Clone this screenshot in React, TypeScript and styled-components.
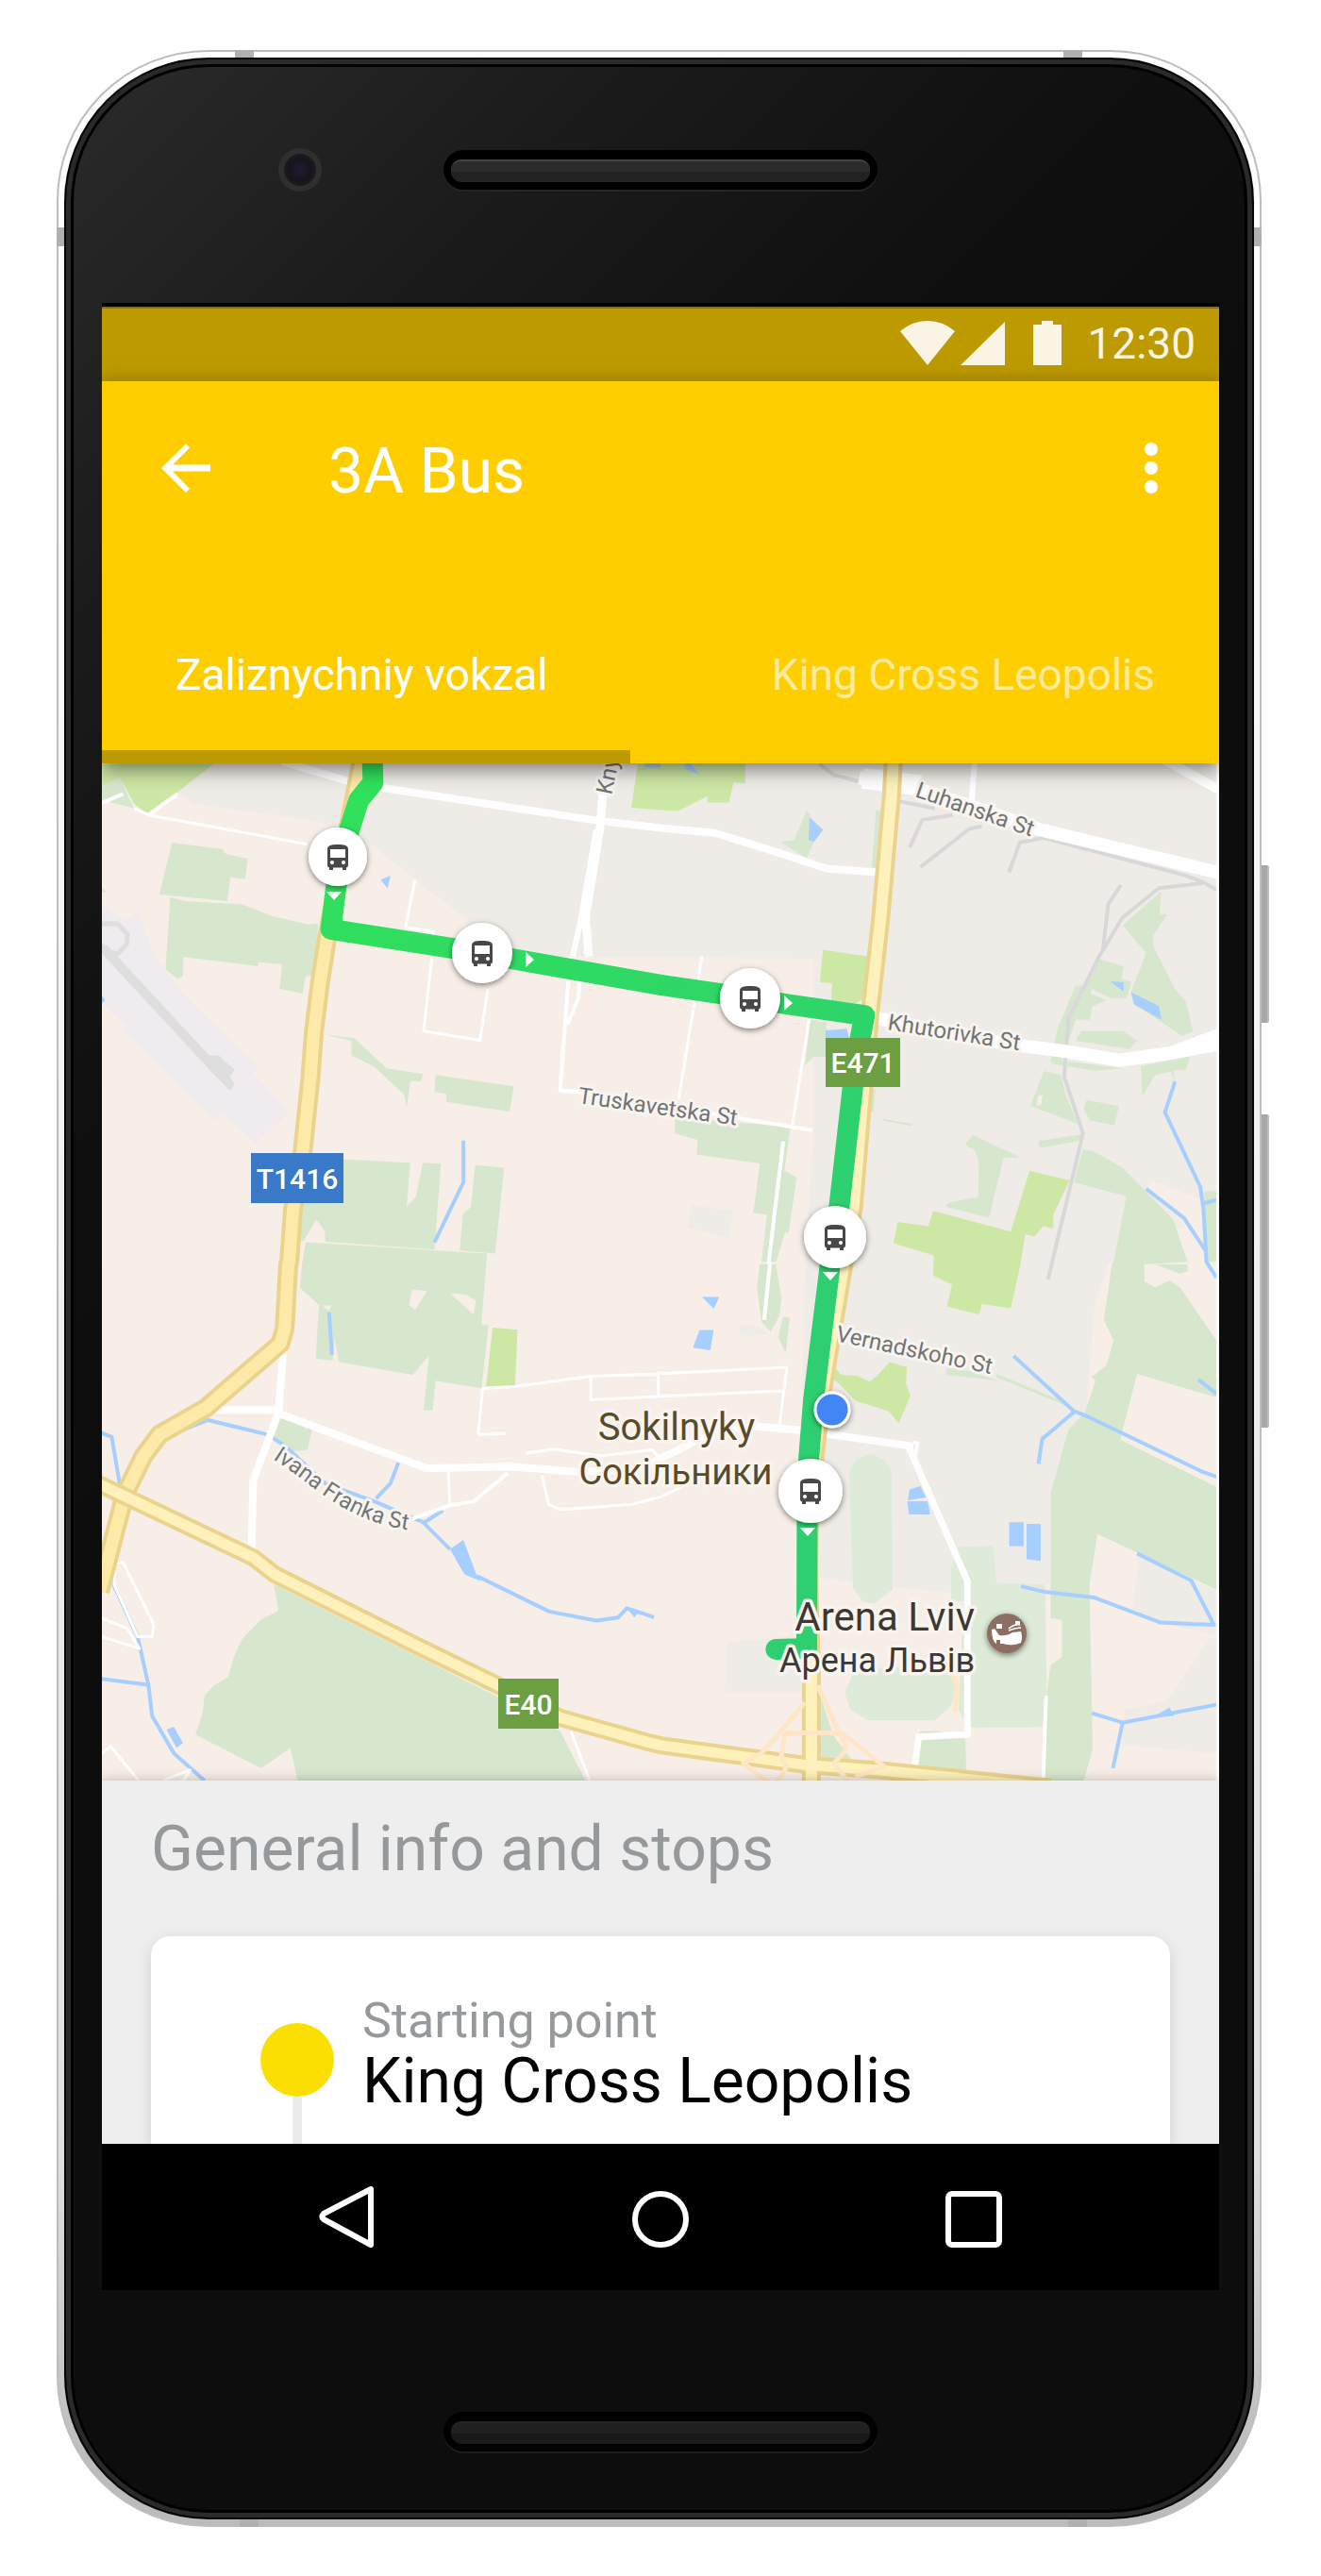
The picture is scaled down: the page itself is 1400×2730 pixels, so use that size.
import React, { useState } from "react";
import styled, { createGlobalStyle } from "styled-components";

const GlobalStyle = createGlobalStyle`
  * { box-sizing: border-box; }
  body {
    margin: 0;
    background: #ffffff;
    font-family: Roboto, "Noto Sans", "Liberation Sans", sans-serif;
  }
`;

/* ---------- Handset ---------- */

const Page = styled.main`
  padding: 53px 63px 52px 60px;
`;

const Frame = styled.div`
  position: relative;
  padding: 6px;
  border: 2px solid #bdbdbd;
  border-radius: 160px;
  background: linear-gradient(180deg, #ffffff 0%, #f4f4f4 40%, #e2e0de 85%, #bbbbbb 98%);
`;

const Body = styled.div`
  padding: 0 35px 0 38px;
  border: 2px solid #050505;
  border-radius: 153px;
  box-shadow: inset 0 0 0 5px #2a2a2a, inset 0 0 0 8px #000000;
  background: linear-gradient(135deg, #2b2b2b 0, #1b1b1b 420px, #101010 800px, #0d0d0d 1100px);
`;

const Antenna = styled.span<{ $edge: "top" | "bottom" | "left" | "right"; $at: string }>`
  position: absolute;
  background: #b0b0b0;
  ${({ $edge }) => $edge}: -2px;
  ${({ $edge, $at }) =>
    $edge === "top" || $edge === "bottom"
      ? `left: ${$at}; width: 20px; height: 8px;`
      : `top: ${$at}; width: 8px; height: 20px;`}
`;

const SideKey = styled.span<{ $top: number; $length: number }>`
  position: absolute;
  right: -10px;
  top: ${({ $top }) => $top}px;
  width: 8px;
  height: ${({ $length }) => $length}px;
  border-right: 2px solid #bdbdbd;
  border-radius: 0 2px 2px 0;
  background: #a8a8a8;
`;

const TopBezel = styled.div`
  display: grid;
  grid-template-columns: 1fr 460px 1fr;
  align-items: center;
  height: 258px;
  padding-bottom: 24px;
`;

const BottomBezel = styled.div`
  display: flex;
  align-items: center;
  justify-content: center;
  height: 241px;
  padding-top: 59px;
`;

const Camera = styled.span`
  justify-self: end;
  width: 46px;
  height: 46px;
  margin-right: 129px;
  border: 6px solid #2f2f2f;
  border-radius: 50%;
  background: radial-gradient(circle, #221a38 0, #17141c 50%, #1f1c24 80%, #141217 100%);
`;

const Speaker = styled.span<{ $dim?: boolean }>`
  width: 460px;
  height: 42px;
  padding: 10px 8px;
  border-radius: 21px;
  background: #000000;
  box-shadow: 0 2px 0 ${({ $dim }) => ($dim ? "#1c1c1c" : "#242424")};

  &::before {
    content: "";
    display: block;
    height: 22px;
    border-top: 2px solid ${({ $dim }) => ($dim ? "#262626" : "#444444")};
    border-radius: 11px;
    background: ${({ $dim }) =>
      $dim
        ? "linear-gradient(180deg, #202020 50%, #191919 50%)"
        : "linear-gradient(180deg, #2b2b2b 50%, #222222 50%)"};
  }
`;

const Screen = styled.div`
  overflow: hidden;
  border-top: 4px solid #000000;
  background: #000000;
`;

/* ---------- App bar ---------- */

const StatusBar = styled.div`
  display: flex;
  align-items: center;
  justify-content: flex-end;
  height: 79px;
  padding: 0 25px 4px 0;
  border-top: 2px solid #8a7000;
  background: #bc9a00;
  color: #f9f4e4;
  font-size: 46px;
  line-height: 56px;
`;

const StatusIcons = styled.svg`
  width: 176px;
  height: 48px;
  margin-right: 22px;
  fill: currentColor;
`;

const Header = styled.header`
  position: relative;
  z-index: 1;
  background: #ffce00;
  color: #ffffff;
  box-shadow: 0 6px 20px rgba(0, 0, 0, 0.5);
`;

const Toolbar = styled.div`
  display: flex;
  align-items: center;
  height: 192px;
  padding: 0 48px 0 64px;
`;

const IconButton = styled.button`
  display: block;
  width: 48px;
  height: 72px;
  padding: 0 0 8px;
  border: 0;
  background: transparent;
  color: inherit;
  cursor: pointer;

  svg {
    display: block;
    width: 100%;
    height: 100%;
    overflow: visible;
    fill: currentColor;
  }
`;

const Title = styled.h1`
  flex: 1;
  margin: 0;
  padding-left: 128px;
  font-size: 66px;
  font-weight: 400;
  line-height: 80px;
`;

const Tabs = styled.div`
  display: flex;
`;

const Tab = styled.button<{ $active: boolean; $end?: boolean }>`
  flex: ${({ $end }) => ($end ? "1" : "0 0 47.3%")};
  padding: 91px 68px 52px 78px;
  border: 0;
  border-bottom: 14px solid ${({ $active }) => ($active ? "#bc9a00" : "transparent")};
  background: transparent;
  color: ${({ $active }) => ($active ? "#ffffff" : "#ffeb9c")};
  font-family: inherit;
  font-size: 46px;
  line-height: 56px;
  text-align: ${({ $end }) => ($end ? "right" : "left")};
  white-space: nowrap;
  cursor: pointer;
`;

/* ---------- Route details ---------- */

const Details = styled.section`
  position: relative;
  padding: 33px 52px 0;
  background: #eeeeee;
  box-shadow: 0 0 12px rgba(0, 0, 0, 0.25);
  overflow: clip;
  overflow-clip-margin: 12px;
`;

const SectionTitle = styled.h2`
  margin: 0 0 52px;
  color: #96999b;
  font-size: 66px;
  font-weight: 400;
  line-height: 80px;
`;

const Card = styled.div`
  display: flex;
  gap: 30px;
  padding: 0 116px;
  border-radius: 20px 20px 0 0;
  background: #ffffff;
  box-shadow: 0 4px 16px rgba(0, 0, 0, 0.12);
`;

const StopTrack = styled.div`
  display: flex;
  flex-direction: column;
  align-items: center;
  padding-top: 92px;

  &::before {
    content: "";
    width: 78px;
    height: 78px;
    border-radius: 50%;
    background: #fbdf00;
  }

  &::after {
    content: "";
    flex: 1;
    width: 10px;
    background: #ececec;
  }
`;

const StopText = styled.div`
  padding: 62px 0 30px;
`;

const StopKind = styled.p`
  margin: 0;
  color: #96999b;
  font-size: 52px;
  line-height: 56px;
`;

const StopName = styled.p`
  margin: 0;
  color: #000000;
  font-size: 66px;
  line-height: 72px;
`;

const NavBar = styled.nav`
  position: relative;
  display: grid;
  grid-template-columns: repeat(3, 28%);
  justify-content: center;
  justify-items: center;
  align-items: center;
  height: 155px;
  background: #000000;
  color: #ffffff;
`;

const NavButton = styled.button`
  padding: 0;
  border: 0;
  background: transparent;
  color: inherit;
  cursor: pointer;

  svg {
    display: block;
    width: 64px;
    height: 68px;
    fill: none;
    stroke: currentColor;
    stroke-width: 6;
    stroke-linejoin: round;
  }
`;

/* ---------- Map ---------- */

const MapSvg = styled.svg`
  display: block;
  width: 100%;
  height: auto;
  background: #f7eee7;

  polyline, .line { fill: none; stroke-linejoin: round; }
  text { font-family: Roboto, "Noto Sans", sans-serif; }
`;

const StreetName = styled.text`
  fill: #737373;
  font-size: 24px;
  paint-order: stroke;
  stroke: #f8f5f1;
  stroke-width: 6px;
  stroke-linejoin: round;
`;

const PlaceName = styled.text<{ $size: number; $tone: string }>`
  fill: ${({ $tone }) => $tone};
  font-size: ${({ $size }) => $size}px;
  paint-order: stroke;
  stroke: #f9f4ee;
  stroke-width: 7px;
  stroke-linejoin: round;
`;

const ShieldText = styled.text`
  fill: #ffffff;
  font-size: 30px;
  font-weight: 500;
  text-anchor: middle;
`;

/* The map is split in four tiles; each tile has its own 1568-unit grid. */
const tile = (ox: number, oy: number, sy: number) => (points: string) =>
  points
    .trim()
    .split(/\s+/)
    .map((pair) => {
      const [x, y] = pair.split(",").map(Number);
      return `${Math.round((ox + (x * 600) / 1568) * 10) / 10},${Math.round((oy + (y * sy) / 1568) * 10) / 10}`;
    })
    .join(" ") + " ";

const nw = tile(100, 800, 540);
const ne = tile(700, 800, 540);
const sw = tile(100, 1340, 560);
const se = tile(700, 1340, 560);

type Line = [number, string];

const urban = [
  nw("330,28 230,110 270,150 620,205 770,280 1030,505 1050,620") +
    ne("0,622 425,628 425,1150") +
    se("400,0 390,550 437,760 440,930 640,958 820,975 1080,950 1080,680 1180,440 1200,140 1240,0") +
    ne("1545,1400 1545,20"),
  ne("85,1385 202,1403 190,1487 75,1457"),
  se("185,1120 390,1100 390,1270 178,1268"),
  se("1325,870 1470,938 1540,965 1540,1100 1385,1063 1308,1025"),
  se("1520,1112 1540,1105 1540,1452 1278,1425 1285,1320 1400,1298"),
  se("220,178 270,185 300,205 260,212 218,210"),
];

const airport = nw(
  "22,465 88,510 118,480 170,625 250,740 455,960 440,980 538,1100 447,1197 355,1103 335,1125 78,843 90,835 22,765"
);

const woods = [
  nw("215,270 357,290 360,303 425,320 418,382 377,377 368,450 180,430"),
  nw("210,438 250,450 410,460 490,495 590,522 620,518 610,680 585,680 577,735 513,720 520,645 455,638 453,650 247,622 245,680 230,690 197,660"),
  nw("635,860 720,872 810,965 910,982 905,1005 875,1003 865,1085 858,1045 775,960 712,925 712,880"),
  nw("945,985 1162,1020 1150,1098 975,1068 975,1042 942,1038"),
  nw("690,1245 875,1255 865,1390 890,1360 910,1255 960,1258 942,1522 640,1498 638,1465 615,1430 580,1495 565,1495 580,1380 690,1380"),
  nw("1055,1262 1135,1270 1110,1535 1012,1525 1020,1415 1043,1390"),
  nw("585,1500 1088,1535") +
    sw("1085,0 1072,177 1092,180 1072,368 945,345 937,433 912,433 927,270 882,328 677,290 665,220 660,285 613,280 622,120 570,70 575,0"),
  nw("22,95 70,70 110,165 22,140"),
  nw("22,408 35,425 22,421"),
  ne("405,170 415,185 410,200 412,262 425,268 405,318 330,268 370,262"),
  ne("597,170 610,172 600,350 585,345"),
  ne("415,815 460,825 457,930 425,928 400,955"),
  ne("1387,420 1382,490 1405,490 1365,555 1365,590 1425,720 1455,760 1475,850 1445,865 1310,765 1303,730 1345,610 1280,525"),
  ne("1215,628 1282,650 1277,690 1305,700 1290,750 1250,750 1195,720 1190,735 1235,755 1195,775 1190,815 1150,815 1110,945 1080,945 1100,840 1150,710 1175,710"),
  ne("1165,850 1280,850 1320,880 1300,905 1150,880"),
  ne("1080,935 1180,950 1280,965 1200,972 1085,950"),
  ne("1330,958 1467,928 1455,970 1420,970 1425,1005 1413,975 1370,985 1335,1050"),
  ne("1062,973 1110,985 1120,1040 1155,1135 1025,1080"),
  ne("1180,1063 1270,1080 1257,1140 1190,1125 1172,1090"),
  ne("1047,1188 1165,1168 1165,1187 1050,1210"),
  ne("1505,1345 1545,1340 1545,1560 1515,1560"),
  ne("40,1115 360,1145 343,1280 377,1300 355,1470 345,1470 320,1560 280,1560 295,1415 257,1410 275,1257 100,1230 103,1185 40,1165"),
  ne("865,1170 997,1238 950,1240 910,1425 790,1390 800,1378 880,1360 882,1250 870,1215 843,1200"),
  ne("570,1010 595,1030 590,1100 560,1090"),
  ne("557,1160 570,1200 560,1330 525,1400"),
  ne("615,1120 698,1135 695,1142 615,1125"),
  ne("1170,1213 1200,1220 1280,1270 1420,1430 1460,1560") +
    se("1340,0 1340,50 1370,68 1410,48 1440,70 1540,225 1540,395 1320,325 1273,520 1540,660 1540,965 1210,800 1188,950 1197,1440 1172,1532 1060,1532 1070,1280 1080,1190 1112,1165 1112,1055 1080,1050 1080,680 1130,490 1175,440 1205,345 1193,335 1235,300 1255,225 1228,165 1250,0") +
    ne("1255,1560 1290,1358 1145,1315"),
  se("1370,0 1460,0 1460,20 1440,28"),
  se("275,0 320,0 335,100 330,150 305,200 280,170 267,70"),
  se("340,155 358,158 347,262 325,215"),
  se("500,0 518,0 512,60 498,62"),
  se("793,305 860,318 935,345 790,328"),
  se("930,325 1125,410 1120,418 930,335"),
  se("445,1290 480,1400 515,1450 540,1480 440,1470"),
  se("720,1385 770,1385 845,1408 847,1532 700,1500"),
  sw("497,950 720,1070 1130,1290 1290,1385 1360,1532 563,1532 543,1435 462,1495 280,1395 300,1330 305,1280 330,1250 370,1225 388,1160 410,1110 460,1055 510,1028"),
  sw("515,455 603,490 590,550 545,555 495,510"),
];

const stadium = [
  se("585,562 620,580 640,610 643,965 590,1008 560,1000 533,960 522,610 545,575"),
  se("540,1200 800,1190 820,1250 805,1310 760,1352 575,1352 525,1320 510,1270"),
  se("825,838 922,836 930,945 1065,950 1070,1280 1065,1373 855,1375 825,1320 840,1000 805,1000 805,900"),
];

const parks = [
  nw("22,28 330,28 150,185 110,150 70,70 22,95"),
  nw("1505,28 1570,28 1570,170 1487,163"),
  ne("0,28 235,28 235,88 202,85 190,147 130,147 130,128 50,172 0,170"),
  ne("450,600 572,620 562,750 540,765 473,755 475,703 442,700"),
  ne("1022,1280 1133,1310 1088,1415 1088,1458 1060,1450 1035,1482 1010,1475 998,1560") +
    se("997,0 970,130 890,118 883,148 793,125 808,60 755,33") +
    ne("757,1540 645,1503 657,1437 742,1450 755,1403 970,1467"),
  se("470,330 487,310 500,328 545,330 580,348 600,330 635,290 682,305 680,355 692,390 660,472 632,435 540,405 500,360"),
  sw("1103,188 1172,194 1165,362 1085,362"),
];

const clearings = [
  sw("880,75 922,78 888,135 872,120"),
  sw("985,85 1030,90 1057,108 1050,148"),
  sw("632,122 655,122 650,140"),
  ne("1360,1310 1500,1370 1512,1530 1430,1420 1345,1340"),
  ne("1045,1050 1058,1045 1055,1075 1042,1080"),
];

const ponds = [
  nw("793,385 820,372 812,410"),
  nw("1525,28 1568,28 1568,40 1525,40"),
  nw("20,740 30,755 20,765"),
  ne("65,28 85,28 108,60 70,45"),
  ne("412,192 450,230 425,268 410,262"),
  ne("457,848 515,843 523,871 457,871"),
  ne("1245,697 1283,700 1283,728"),
  ne("1303,730 1380,772 1388,815 1312,768"),
  se("115,97 163,97 147,132"),
  se("108,195 147,195 138,255 90,247"),
  se("690,668 720,658 735,692 685,700"),
  se("683,703 740,703 747,742 688,742"),
  se("966,765 1006,765 1006,836 966,836"),
  se("1014,770 1053,770 1053,880 1014,875"),
  se("1360,1345 1410,1315 1422,1340"),
  sw("985,845 1022,818 1058,920 1070,940 1025,920"),
  sw("200,1380 220,1372 245,1420 228,1435"),
  sw("1475,1020 1510,1030 1495,1047"),
];

const streams = [
  nw("1022,1187 1022,1315 942,1500"),
  ne("1425,1005 1397,1100 1495,1330 1504,1400 1512,1560") + se("1540,40"),
  ne("1345,1335 1450,1425 1512,1530"),
  ne("1505,1380 1545,1368"),
  se("1490,342 1545,388"),
  se("978,272 1145,435 1180,450 1500,615 1545,632"),
  se("1145,438 1057,518 1047,592"),
  se("1320,858 1470,938 1533,1070 1385,1063 1200,988 1065,972 998,955"),
  se("1195,1332 1280,1360 1545,1305"),
  se("1280,1360 1253,1495"),
  sw("20,500 48,512 70,650"),
  sw("200,510 315,462 480,505 530,540 640,650 780,705 910,765 985,845"),
  sw("780,695 820,650 842,588"),
  sw("915,765 965,730"),
  sw("1060,925 1260,1030 1390,1057 1450,1048 1475,1020 1550,1047"),
  sw("38,870 60,880 40,920 120,1105 150,1250 160,1340 220,1450 305,1532"),
  sw("20,1230 148,1247"),
  sw("650,142 658,268"),
];

const tracks = [
  ne("440,28 480,62 550,82"),
  ne("650,140 760,165"),
  ne("690,285 725,200 810,185"),
  ne("720,345 855,228 890,220"),
  ne("965,362 995,270 1060,255 1450,370 1500,390 1545,418"),
  ne("1500,395 1380,410 1280,500 1215,620 1130,810 1118,990 1170,1165 1085,1560") + se("1073,45"),
  ne("1275,400 1240,460 1225,600"),
];

const streets: Line[] = [
  [8, nw("520,20 730,90 1380,200 1568,225") + ne("150,240 310,295 460,350 610,362")],
  [3, nw("110,165 150,185 590,275")],
  [4, nw("150,185 230,120")],
  [4, nw("20,148 80,120")],
  [9, nw("1410,100 1400,230 1360,500 1370,620")],
  [6, nw("1390,230 1345,520 1325,620")],
  [4, nw("1318,620 1290,1033 1340,1037") + ne("215,1118 420,1155")],
  [4, nw("1345,680 1340,750 1310,830")],
  [3, nw("888,385 862,530 940,545 935,620 912,850 1068,878 1090,720")],
  [3, ne("115,620 50,1060")],
  [3, ne("412,810 365,1140")],
  [14, ne("550,70 700,100 1050,230 1545,362")],
  [22, ne("560,72 720,95")],
  [6, ne("870,20 862,140")],
  [10, ne("1395,15 1560,115")],
  [14, ne("560,800 800,860 1000,895 1120,912 1270,940 1400,920 1545,890")],
  [12, ne("1400,920 1545,860")],
  [4, ne("340,1190 315,1420 300,1560") + se("303,0 287,165")],
  [8, sw("525,235 510,440 440,640 435,860")],
  [8, sw("320,432 510,432")],
  [8, sw("505,440 920,605 1150,600 1330,615 1500,610") + se("60,545 150,490 260,480 390,492 700,540")],
  [7, se("685,535 850,940 850,1395 715,1402 703,1500")],
  [4, se("700,530 712,530 705,570")],
  [3, sw("1063,505 1075,368 1170,362 1375,332 1560,325") + se("350,305 330,475")],
  [3, sw("1063,505 1140,503")],
  [3, sw("1375,335 1375,402 1560,392") + se("340,375")],
  [3, sw("1562,325 1562,392")],
  [3, sw("980,610 985,715")],
  [4, sw("880,755 985,715 1050,703 1145,620")],
  [3, sw("1240,625 1258,712 1290,728 1490,712") + se("0,690 60,660")],
  [3, sw("1195,560 1275,548 1400,568 1545,550 1568,580")],
  [3, sw("55,885 80,885 165,1070 160,1105 120,1105 55,950 55,885")],
  [3, sw("20,1050 90,1080 125,1140 20,1105")],
  [3, sw("20,1450 45,1430 125,1535")],
  [3, sw("190,1532 265,1500 245,1535")],
  [3, sw("1320,1385 1372,1532")],
  [4, se("1068,1280 1065,1370 1060,1532")],
];

const ramps = [
  se("400,1300 330,1390 280,1450 230,1480 300,1540"),
  se("345,1390 335,1460 350,1490 320,1540"),
  se("345,1390 500,1390 515,1440 480,1480 520,1535"),
  se("435,1250 490,1380 620,1490 540,1520"),
  se("800,1200 822,1250 815,1330"),
];

const roadT = nw("740,20 690,300 645,560 625,700 608,850 598,1000 577,1220 550,1400 540,1560") +
  sw("537,0 527,190 515,235 310,425 180,505 135,570 85,680 15,970");
const roadE40 = sw("0,645 440,870 500,920 900,1135 1130,1255 1290,1345 1540,1420") + se("0,1427 400,1485 600,1500 1080,1552");
const roadE471 = ne("645,15 640,120 610,500 580,800 535,1390") + se("445,400 415,700 410,900 418,1210 418,1560");

const route = nw("770,10 772,85 732,140 708,225 670,400 655,537 990,595 1160,628") +
  ne("0,708 165,735 355,768 565,802 540,950 495,1390") +
  se("470,0 424,400 411,570 406,760 405,1140 320,1142");

const stops = [
  { x: 358, y: 908, r: 31 },
  { x: 511, y: 1010, r: 32 },
  { x: 795, y: 1058, r: 32 },
  { x: 885, y: 1311, r: 33 },
  { x: 859, y: 1580, r: 34 },
];

const arrows = [
  { x: 354, y: 949, turn: 0 },
  { x: 561, y: 1017, turn: -90 },
  { x: 835, y: 1063, turn: -90 },
  { x: 880, y: 1352, turn: 0 },
  { x: 856, y: 1623, turn: 0 },
];

const Areas = ({ shapes, fill }: { shapes: string[]; fill: string }) => (
  <g fill={fill}>
    {shapes.map((points, i) => (
      <polygon key={i} points={points} />
    ))}
  </g>
);

const Lines = ({ lines, stroke, width }: { lines: string[]; stroke: string; width: number }) => (
  <g stroke={stroke} strokeWidth={width}>
    {lines.map((points, i) => (
      <polyline key={i} points={points} />
    ))}
  </g>
);

const Road = ({ points, width, fill }: { points: string; width: number; fill: string }) => (
  <>
    <polyline points={points} stroke="#ead38c" strokeWidth={width} />
    <polyline points={points} stroke={fill} strokeWidth={width - 8} />
  </>
);

const Stop = ({ x, y, r }: { x: number; y: number; r: number }) => (
  <g transform={`translate(${x} ${y})`}>
    <circle r={r} fill="#ffffff" filter="url(#lift)" />
    <path
      fill="#484848"
      fillRule="evenodd"
      d="M-11,-8 C-11,-12 -7,-13 0,-13 C7,-13 11,-12 11,-8 V9 Q11,11 9,11.500 V14 H5 V11.500 H-5 V14 H-9 V11.500 Q-11,11 -11,9 Z M-8,-8 V1 H8 V-8 Z M-6,4 A2,2 0 1 0 -6,8.200 A2,2 0 1 0 -6,4 Z M6,4 A2,2 0 1 0 6,8.200 A2,2 0 1 0 6,4 Z"
    />
  </g>
);

const Shield = ({ x, y, w, h, fill, label }: { x: number; y: number; w: number; h: number; fill: string; label: string }) => (
  <g>
    <rect x={x} y={y} width={w} height={h} fill={fill} />
    <ShieldText x={x + w / 2} y={y + h / 2 + 11}>
      {label}
    </ShieldText>
  </g>
);

const RouteMap = () => (
  <MapSvg viewBox="108 809 1184 1078" role="img" aria-label="Route map">
    <defs>
      <linearGradient id="routeTone" gradientUnits="userSpaceOnUse" x1="358" y1="820" x2="700" y2="1420">
        <stop offset="0" stopColor="#30e25a" />
        <stop offset="1" stopColor="#2dcf70" />
      </linearGradient>
      <filter id="lift" x="-40%" y="-40%" width="180%" height="180%">
        <feDropShadow dx="0" dy="2" stdDeviation="3" floodColor="#000000" floodOpacity="0.5" />
      </filter>
      <path id="franka" d="M289,1546 C320,1566 338,1584 368,1600 S420,1620 452,1624" />
    </defs>

    <Areas shapes={urban} fill="#efece7" />
    <Areas shapes={[airport]} fill="#efebee" />
    <g stroke="#dedede" className="line">
      <polyline points={nw("15,520 65,520 92,552 90,582 65,612 35,605 15,580")} strokeWidth="5" />
      <polyline points={nw("25,595 350,985")} strokeWidth="10" />
    </g>
    <Areas shapes={[nw("315,925 345,925 388,970 375,990 388,1015 375,1033 320,970")]} fill="#dedede" />
    <Areas shapes={woods} fill="#d7e7ce" />
    <Areas shapes={stadium} fill="#deebd8" />
    <Areas shapes={parks} fill="#cde7a4" />
    <Areas shapes={clearings} fill="#f7eee7" />
    <Lines lines={streams} stroke="#a6ceff" width={4} />
    <Areas shapes={ponds} fill="#a6ceff" />
    <Lines lines={tracks} stroke="#d8d8d8" width={4} />
    <g stroke="#ffffff">
      {streets.map(([width, points], i) => (
        <polyline key={i} points={points} strokeWidth={width} />
      ))}
    </g>
    <Road points={roadT} width={21} fill="#feeaa8" />
    <Road points={roadE471} width={20} fill="#fff1bb" />
    <Road points={roadE40} width={19} fill="#fff1bb" />
    <polyline points={se("418,1420 418,1540")} stroke="#fff1bb" strokeWidth="12" />
    <Lines lines={ramps} stroke="#fee6c6" width={5} />
    <rect x="1289" y="809" width="3" height="1078" fill="#ffffff" />

    <polyline points={route} stroke="url(#routeTone)" strokeWidth="22" strokeLinecap="round" />
    {arrows.map(({ x, y, turn }) => (
      <path key={`${x}-${y}`} d="M-8,-4 H8 L0,5 Z" fill="#ffffff" transform={`translate(${x} ${y}) rotate(${turn})`} />
    ))}
    {stops.map((stop) => (
      <Stop key={`${stop.x}-${stop.y}`} {...stop} />
    ))}
    <circle cx="882" cy="1494" r="18" fill="#4285f4" stroke="#ffffff" strokeWidth="3" filter="url(#lift)" />

    <StreetName transform="translate(648 843) rotate(-78)">Kny</StreetName>
    <StreetName transform="translate(969 844) rotate(19)">Luhanska St</StreetName>
    <StreetName transform="translate(940 1091) rotate(9)">Khutorivka St</StreetName>
    <StreetName transform="translate(612 1169) rotate(8)">Truskavetska St</StreetName>
    <StreetName transform="translate(885 1421) rotate(12)">Vernadskoho St</StreetName>
    <StreetName>
      <textPath href="#franka">Ivana Franka St</textPath>
    </StreetName>

    <Shield x={266} y={1222} w={98} h={53} fill="#3a78c8" label="T1416" />
    <Shield x={875} y={1100} w={79} h={52} fill="#6c9f42" label="E471" />
    <Shield x={528} y={1779} w={64} h={53} fill="#6c9f42" label="E40" />

    <PlaceName x="717" y="1526" textAnchor="middle" $size={40} $tone="#594b29">Sokilnyky</PlaceName>
    <PlaceName x="716" y="1573" textAnchor="middle" $size={38} $tone="#594b29">Сокільники</PlaceName>
    <PlaceName x="1033" y="1728" textAnchor="end" $size={42} $tone="#3c3835">Arena Lviv</PlaceName>
    <PlaceName x="1033" y="1772" textAnchor="end" $size={36} $tone="#3c3835">Арена Львів</PlaceName>

    <g transform="translate(1067 1731)">
      <circle r="21" fill="#8d6e63" filter="url(#lift)" />
      <path fill="#ffffff" d="M-16,-4 L-13,-5 L-8,2 Q0,3 6,-1 L15,-2 Q17,4 15,10 Q6,14 -4,11 L-7,11 L-7,7 L-11,7 L-11,11 Q-16,8 -16,-4 Z" />
      <path fill="#ffffff" d="M-11,-10 h6 v5 h-6 Z M9,-13 h5 v4 h-5 Z" />
      <path className="line" stroke="#ffffff" strokeWidth="1.500" d="M2,-5 Q8,-10 14,-9 M2,-3 Q9,-6 15,-6" />
    </g>
  </MapSvg>
);

/* ---------- App ---------- */

const directions = ["Zaliznychniy vokzal", "King Cross Leopolis"];

export default function App() {
  const [active, setActive] = useState(0);

  return (
    <Page>
      <GlobalStyle />
      <Frame>
        <Antenna $edge="top" $at="187px" />
        <Antenna $edge="top" $at="calc(100% - 208px)" />
        <Antenna $edge="bottom" $at="192px" />
        <Antenna $edge="bottom" $at="calc(100% - 203px)" />
        <Antenna $edge="left" $at="186px" />
        <Antenna $edge="right" $at="186px" />
        <SideKey $top={862} $length={167} />
        <SideKey $top={1126} $length={332} />
        <Body>
          <TopBezel>
            <Camera />
            <Speaker />
          </TopBezel>

          <Screen>
            <StatusBar>
              <StatusIcons viewBox="0 0 176 48" aria-hidden="true">
                <path d="M0,11 Q13,0 29,0 Q45,0 58,11 L29,47 Z" />
                <path d="M111,1 V47 H64 Z" />
                <path d="M141,4 h9 v-4 h12 v4 h9 v43 h-30 Z" />
              </StatusIcons>
              <span>12:30</span>
            </StatusBar>

            <Header>
              <Toolbar>
                <IconButton type="button" aria-label="Back">
                  <svg viewBox="0 0 48 64">
                    <path d="M51,28.500 H11 L29,10.500 L25,6.500 L-1,32 L25,58 L29,54 L11,35.500 H51 Z" />
                  </svg>
                </IconButton>
                <Title>3A Bus</Title>
                <IconButton type="button" aria-label="More options">
                  <svg viewBox="0 0 48 64">
                    <circle cx="24" cy="12" r="7" />
                    <circle cx="24" cy="32" r="7" />
                    <circle cx="24" cy="52" r="7" />
                  </svg>
                </IconButton>
              </Toolbar>
              <Tabs role="tablist">
                {directions.map((name, i) => (
                  <Tab
                    key={name}
                    type="button"
                    role="tab"
                    aria-selected={active === i}
                    $active={active === i}
                    $end={i === 1}
                    onClick={() => setActive(i)}
                  >
                    {name}
                  </Tab>
                ))}
              </Tabs>
            </Header>

            <RouteMap />

            <Details>
              <SectionTitle>General info and stops</SectionTitle>
              <Card>
                <StopTrack />
                <StopText>
                  <StopKind>Starting point</StopKind>
                  <StopName>King Cross Leopolis</StopName>
                </StopText>
              </Card>
            </Details>

            <NavBar aria-label="System">
              <NavButton type="button" aria-label="Back">
                <svg viewBox="0 0 64 68">
                  <path d="M57,4 V63 L7,36 Q4,33 7,30 Z" />
                </svg>
              </NavButton>
              <NavButton type="button" aria-label="Home">
                <svg viewBox="0 0 64 68">
                  <circle cx="32" cy="36" r="27" />
                </svg>
              </NavButton>
              <NavButton type="button" aria-label="Recent apps">
                <svg viewBox="0 0 64 68">
                  <rect x="5" y="9" width="54" height="54" rx="4" />
                </svg>
              </NavButton>
            </NavBar>
          </Screen>

          <BottomBezel>
            <Speaker $dim />
          </BottomBezel>
        </Body>
      </Frame>
    </Page>
  );
}
